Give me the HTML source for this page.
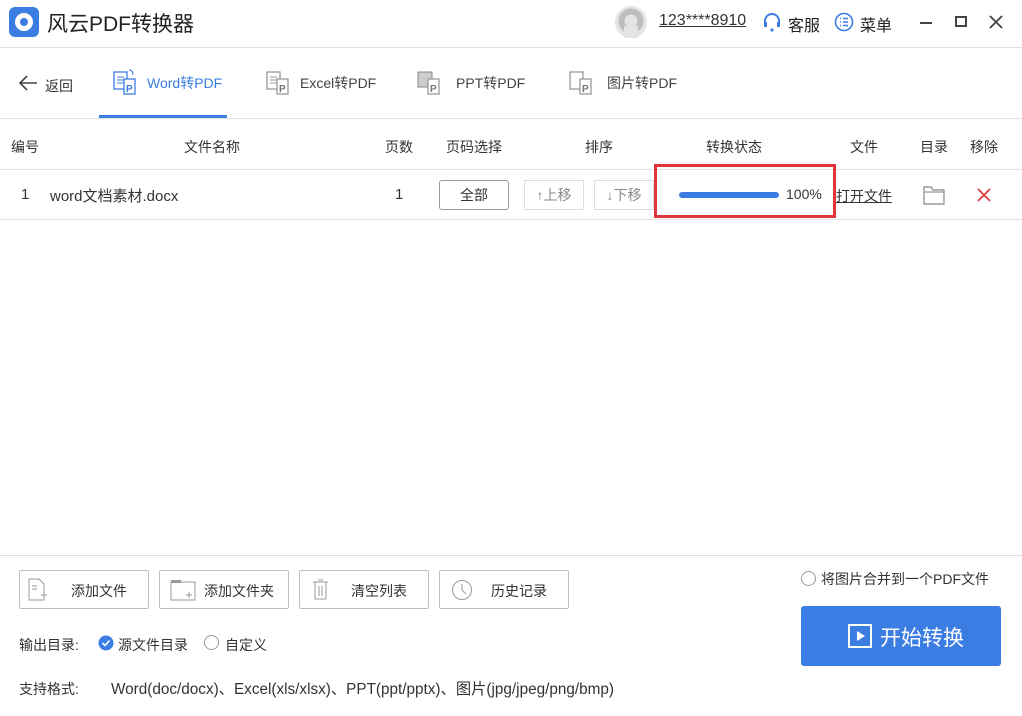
<!DOCTYPE html>
<html><head><meta charset="utf-8"><style>
*{margin:0;padding:0;box-sizing:border-box}
body{width:1022px;height:716px;background:#fff;font-family:"Liberation Sans","Noto Sans CJK SC",sans-serif;color:#333;position:relative;overflow:hidden;font-size:14px}
.a{position:absolute;white-space:nowrap}
.hl{position:absolute;left:0;width:1022px;height:1px;background:#e3e3e3}
.btn{position:absolute;border:1px solid #bfbfbf;border-radius:2px;height:39px;top:570px;width:130px;font-size:14px;color:#333}
.btn span{position:absolute;top:10px}
.sm{position:absolute;border:1px solid #ddd;height:30px;top:180px;font-size:14px;color:#888;text-align:center;line-height:28px}
</style></head><body>
<div class="a" style="left:9px;top:7px;width:30px;height:30px;background:#3b7de3;border-radius:6px"></div>
<div class="a" style="left:15px;top:13px;width:18px;height:18px;border-radius:50%;background:#fff"></div>
<div class="a" style="left:20px;top:18px;width:8px;height:8px;border-radius:50%;background:#3b7de3"></div>
<div class="a" style="left:47px;top:8px;font-size:21px;color:#222">风云PDF转换器</div>
<svg class="a" style="left:615px;top:6px" width="32" height="32"><circle cx="16" cy="16" r="16" fill="#e4e4e4"/><circle cx="16" cy="15" r="9.5" fill="none" stroke="#bdbdbd" stroke-width="6"/><rect x="9" y="20" width="14" height="12" fill="#e4e4e4"/></svg>
<div class="a" style="left:659px;top:12px;font-size:16px;color:#333;text-decoration:underline">123****8910</div>
<svg class="a" style="left:762px;top:11px" width="20" height="22"><path d="M3 13 V10 A7 7 0 0 1 17 10 V13" fill="none" stroke="#3b7de3" stroke-width="2"/><rect x="2" y="11" width="3" height="5" fill="#3b7de3"/><rect x="15" y="11" width="3" height="5" fill="#3b7de3"/><circle cx="10" cy="19" r="1.6" fill="#3b7de3"/></svg>
<div class="a" style="left:788px;top:12px;font-size:16px;color:#222">客服</div>
<svg class="a" style="left:834px;top:12px" width="20" height="20"><circle cx="10" cy="10" r="8.5" fill="none" stroke="#3b7de3" stroke-width="1.6"/><path d="M6 6.5h1M9 6.5h5M6 10h1M9 10h5M6 13.5h1M9 13.5h5" stroke="#3b7de3" stroke-width="1.5"/></svg>
<div class="a" style="left:860px;top:12px;font-size:16px;color:#222">菜单</div>
<div class="a" style="left:920px;top:22px;width:12px;height:2px;background:#444"></div>
<div class="a" style="left:955px;top:16px;width:12px;height:11px;border:2px solid #444"></div>
<svg class="a" style="left:989px;top:15px" width="14" height="14"><path d="M1 1L13 13M13 1L1 13" stroke="#444" stroke-width="1.8"/></svg>
<div class="hl" style="top:47px"></div>
<svg class="a" style="left:18px;top:74px" width="20" height="18"><path d="M19 9H2M9 2L2 9L9 16" fill="none" stroke="#444" stroke-width="1.6"/></svg>
<div class="a" style="left:45px;top:76px;font-size:14px">返回</div>
<svg class="a" style="left:113px;top:68px" width="26" height="28"><rect x="1" y="4" width="13" height="17" fill="none" stroke="#3b7de3" stroke-width="1.3"/><path d="M4 9h7M4 12h7M4 15h7" stroke="#3b7de3"/><rect x="11" y="11" width="11" height="15" fill="#fff" stroke="#3b7de3" stroke-width="1.3"/><text x="13" y="24" font-size="10" font-weight="bold" fill="#3b7de3" font-family="Liberation Sans">P</text><path d="M16 2 Q20 2 20 7" fill="none" stroke="#3b7de3"/></svg>
<div class="a" style="left:147px;top:73px;font-size:14px;color:#3b7de3">Word转PDF</div>
<div class="a" style="left:99px;top:115px;width:128px;height:3px;background:#3b7de3"></div>
<svg class="a" style="left:266px;top:68px" width="26" height="28"><rect x="1" y="4" width="13" height="17" fill="none" stroke="#999" stroke-width="1.3"/><path d="M4 9h7M4 12h7M4 15h7" stroke="#999"/><rect x="11" y="11" width="11" height="15" fill="#fff" stroke="#999" stroke-width="1.3"/><text x="13" y="24" font-size="10" font-weight="bold" fill="#777" font-family="Liberation Sans">P</text></svg>
<div class="a" style="left:300px;top:73px;font-size:14px;color:#444">Excel转PDF</div>
<svg class="a" style="left:417px;top:68px" width="26" height="28"><rect x="1" y="4" width="14" height="15" fill="#ccc" stroke="#888"/><rect x="11" y="11" width="11" height="15" fill="#fff" stroke="#999" stroke-width="1.3"/><text x="13" y="24" font-size="10" font-weight="bold" fill="#777" font-family="Liberation Sans">P</text></svg>
<div class="a" style="left:456px;top:73px;font-size:14px;color:#444">PPT转PDF</div>
<svg class="a" style="left:569px;top:68px" width="26" height="28"><rect x="1" y="4" width="13" height="17" fill="none" stroke="#999" stroke-width="1.3"/><rect x="11" y="11" width="11" height="15" fill="#fff" stroke="#999" stroke-width="1.3"/><text x="13" y="24" font-size="10" font-weight="bold" fill="#777" font-family="Liberation Sans">P</text></svg>
<div class="a" style="left:607px;top:73px;font-size:14px;color:#444">图片转PDF</div>
<div class="hl" style="top:118px"></div>
<div class="a" style="left:11px;top:137px">编号</div>
<div class="a" style="left:184px;top:137px">文件名称</div>
<div class="a" style="left:385px;top:137px">页数</div>
<div class="a" style="left:446px;top:137px">页码选择</div>
<div class="a" style="left:585px;top:137px">排序</div>
<div class="a" style="left:706px;top:137px">转换状态</div>
<div class="a" style="left:850px;top:137px">文件</div>
<div class="a" style="left:920px;top:137px">目录</div>
<div class="a" style="left:970px;top:137px">移除</div>
<div class="hl" style="top:169px"></div>
<div class="a" style="left:21px;top:186px;font-size:15px">1</div>
<div class="a" style="left:50px;top:185px;font-size:15px">word文档素材.docx</div>
<div class="a" style="left:395px;top:186px;font-size:15px">1</div>
<div class="a" style="left:439px;top:180px;width:70px;height:30px;border:1px solid #999;border-radius:3px;text-align:center;line-height:28px;font-size:14px">全部</div>
<div class="sm" style="left:524px;width:60px">↑上移</div>
<div class="sm" style="left:594px;width:60px">↓下移</div>
<div class="a" style="left:654px;top:164px;width:182px;height:54px;border:3px solid #e0353b"></div>
<div class="a" style="left:679px;top:192px;width:100px;height:6px;border-radius:3px;background:#3b7de3"></div>
<div class="a" style="left:786px;top:186px;font-size:14px">100%</div>
<div class="a" style="left:836px;top:186px;font-size:14px;text-decoration:underline">打开文件</div>
<svg class="a" style="left:923px;top:185px" width="22" height="20"><path d="M1 2h7l2 3h11v14H1z" fill="none" stroke="#999" stroke-width="1.4"/><path d="M1 7h20" stroke="#999" stroke-width="1.2"/></svg>
<svg class="a" style="left:977px;top:188px" width="14" height="14"><path d="M1 1L13 13M13 1L1 13" stroke="#e0353b" stroke-width="1.6"/></svg>
<div class="hl" style="top:219px"></div>
<div class="hl" style="top:555px;background:#ddd"></div>
<div class="btn" style="left:19px"><svg class="a" style="left:8px;top:7px" width="22" height="24"><path d="M1 1h10l5 5v16H1z" fill="none" stroke="#999"/><path d="M4 8h5M4 11h5M13 17h6M16 14v6" stroke="#999"/></svg><span style="left:51px">添加文件</span></div>
<div class="btn" style="left:159px"><svg class="a" style="left:10px;top:8px" width="26" height="22"><path d="M1 3h24v18H1z" fill="none" stroke="#999"/><rect x="1" y="1" width="10" height="3" fill="#999"/><path d="M16 16h6M19 13v6" stroke="#999"/></svg><span style="left:44px">添加文件夹</span></div>
<div class="btn" style="left:299px"><svg class="a" style="left:12px;top:8px" width="18" height="22"><path d="M1 3h15M6 1h5M3 3v17h11V3M7 7v10M10 7v10" fill="none" stroke="#999"/></svg><span style="left:51px">清空列表</span></div>
<div class="btn" style="left:439px"><svg class="a" style="left:11px;top:8px" width="22" height="22"><circle cx="11" cy="11" r="9.5" fill="none" stroke="#999"/><path d="M11 5v6l4 4" fill="none" stroke="#999"/></svg><span style="left:51px">历史记录</span></div>
<div class="a" style="left:19px;top:635px">输出目录:</div>
<svg class="a" style="left:98px;top:635px" width="16" height="16"><circle cx="8" cy="8" r="7.5" fill="#3b7de3"/><path d="M4.5 8l2.5 2.5 4.5-5" fill="none" stroke="#fff" stroke-width="1.6"/></svg>
<div class="a" style="left:118px;top:635px">源文件目录</div>
<div class="a" style="left:204px;top:635px;width:15px;height:15px;border:1px solid #999;border-radius:50%"></div>
<div class="a" style="left:225px;top:635px">自定义</div>
<div class="a" style="left:19px;top:679px">支持格式:</div>
<div class="a" style="left:111px;top:677px;font-size:15.3px">Word(doc/docx)、Excel(xls/xlsx)、PPT(ppt/pptx)、图片(jpg/jpeg/png/bmp)</div>
<div class="a" style="left:801px;top:571px;width:15px;height:15px;border:1px solid #999;border-radius:50%"></div>
<div class="a" style="left:821px;top:569px">将图片合并到一个PDF文件</div>
<div class="a" style="left:801px;top:606px;width:200px;height:60px;background:#3b7de3;border-radius:3px"></div>
<svg class="a" style="left:848px;top:624px" width="24" height="24"><rect x="1" y="1" width="22" height="22" fill="none" stroke="#fff" stroke-width="2"/><path d="M9 7v10l8-5z" fill="#fff"/></svg>
<div class="a" style="left:880px;top:622px;font-size:21px;color:#fff">开始转换</div>
</body></html>
